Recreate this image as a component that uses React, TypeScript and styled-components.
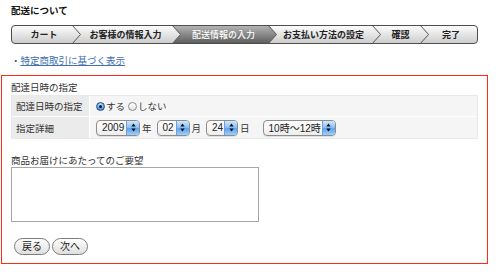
import React from "react";
import styled, { createGlobalStyle } from "styled-components";

const GlobalStyle = createGlobalStyle`
  html, body { margin: 0; padding: 0; background: #fff; }
  body {
    font-family: "Liberation Sans", "Noto Sans CJK JP", sans-serif;
    color: #333;
  }
`;

const LIGHT_TOP = "#fcfcfc";
const LIGHT_BOTTOM = "#cdcdcd";
const DARK_TOP = "#b4b4b4";
const DARK_BOTTOM = "#5e5e5e";

const Page = styled.div`
  width: 500px;
  height: 278px;
  overflow: hidden;
`;

const Header = styled.div`
  padding: 5px 0 0 11px;
`;

const Title = styled.h1`
  margin: 0;
  font-size: 9.5px;
  line-height: 12px;
  font-weight: bold;
  color: #111;
`;

const Stepper = styled.div`
  margin-top: 8px;
  width: 467px;
  height: 19px;
  box-sizing: border-box;
  border: 1px solid #4e4e4e;
  border-radius: 4px;
  overflow: hidden;
  display: flex;
  background: linear-gradient(${LIGHT_TOP}, ${LIGHT_BOTTOM});
`;

const Step = styled.div<{ $w: number; $active?: boolean; $shift: number }>`
  flex: none;
  width: ${(p) => p.$w}px;
  box-sizing: border-box;
  padding-left: ${(p) => Math.max(0, p.$shift) * 2}px;
  padding-right: ${(p) => Math.max(0, -p.$shift) * 2}px;
  display: flex;
  align-items: center;
  justify-content: center;
  font-size: 9px;
  font-weight: bold;
  white-space: nowrap;
  color: ${(p) => (p.$active ? "#f4f4f4" : "#222")};
  background: ${(p) =>
    p.$active ? `linear-gradient(${DARK_TOP}, ${DARK_BOTTOM})` : "transparent"};
  text-shadow: ${(p) => (p.$active ? "0 0 1px rgba(0,0,0,0.35)" : "none")};
`;

const SepSvg = styled.svg<{ $rightActive?: boolean }>`
  flex: none;
  display: block;
  width: 9px;
  height: 17px;
  background: ${(p) =>
    p.$rightActive ? `linear-gradient(${DARK_TOP}, ${DARK_BOTTOM})` : "transparent"};
`;

const Separator: React.FC<{ id: string; leftActive?: boolean; rightActive?: boolean }> = ({
  id,
  leftActive,
  rightActive,
}) => {
  const top = leftActive ? DARK_TOP : LIGHT_TOP;
  const bottom = leftActive ? DARK_BOTTOM : LIGHT_BOTTOM;
  return (
    <SepSvg $rightActive={rightActive} viewBox="0 0 9 17">
      <defs>
        <linearGradient id={id} x1="0" y1="0" x2="0" y2="1">
          <stop offset="0" stopColor={top} />
          <stop offset="1" stopColor={bottom} />
        </linearGradient>
      </defs>
      {(leftActive || rightActive) && (
        <polygon points="0,-1 8.5,8.5 0,18" fill={`url(#${id})`} />
      )}
      <polyline points="0,-1 8.5,8.5 0,18" fill="none" stroke="#575757" strokeWidth="1" />
    </SepSvg>
  );
};

const LinkRow = styled.div`
  margin-top: 11px;
  font-size: 9.5px;
  line-height: 12px;
  color: #555;
`;

const InfoLink = styled.a`
  color: #4170b0;
  text-decoration: underline;
`;

const Box = styled.div`
  margin: 8px 0 0 1px;
  width: 487px;
  box-sizing: border-box;
  border: 1px solid #ff2b17;
  padding: 6px 9px 8px 9px;
`;

const SectionTitle = styled.div`
  font-size: 9.5px;
  line-height: 12px;
  color: #333;
`;

const Table = styled.div`
  margin-top: 1px;
  width: 467px;
  display: grid;
  grid-template-columns: 77px 1fr;
  grid-template-rows: 20px 21px;
  gap: 1px;
  border: 1px solid #e9e9e9;
  background: #fff;
  box-sizing: border-box;
`;

const LabelCell = styled.div`
  background: #ebebeb;
  display: flex;
  align-items: center;
  padding-left: 4px;
  font-size: 9.5px;
  color: #333;
  white-space: nowrap;
`;

const ValueCell = styled.div`
  background: #f5f5f5;
  display: flex;
  align-items: center;
  padding-left: 6px;
  font-size: 9.5px;
  color: #333;
  white-space: nowrap;
`;

const RadioItem = styled.label`
  display: inline-flex;
  align-items: center;
  margin-right: 3px;
`;

const RadioDot = styled.span<{ $checked?: boolean }>`
  width: 9px;
  height: 9px;
  box-sizing: border-box;
  border-radius: 50%;
  margin-right: 1px;
  display: inline-flex;
  align-items: center;
  justify-content: center;
  border: 1px solid ${(p) => (p.$checked ? "#2a4d7a" : "#8a8a8a")};
  background: ${(p) =>
    p.$checked
      ? "radial-gradient(circle at 50% 30%, #d6ecff 0%, #5fa8f2 55%, #2f78d8 100%)"
      : "linear-gradient(#ffffff, #e4e4e4)"};
  &::after {
    content: "";
    width: 3px;
    height: 3px;
    border-radius: 50%;
    background: ${(p) => (p.$checked ? "#111" : "transparent")};
  }
`;

const SelectBox = styled.div<{ $w: number }>`
  width: ${(p) => p.$w}px;
  height: 16px;
  box-sizing: border-box;
  border: 1px solid #8c8c8c;
  border-radius: 4px;
  overflow: hidden;
  display: inline-flex;
  background: linear-gradient(#ffffff, #ededed);
  box-shadow: 0 1px 0 rgba(0, 0, 0, 0.08);
`;

const SelectValue = styled.span`
  flex: 1;
  display: flex;
  align-items: center;
  padding-left: 5px;
  font-size: 10px;
  color: #222;
`;

const SelectArrow = styled.span`
  flex: none;
  width: 12px;
  display: flex;
  align-items: center;
  justify-content: center;
  border-left: 1px solid #7b9ccb;
  background: linear-gradient(#cfe7ff 0%, #8cc2f7 45%, #5ba3ef 55%, #9fd0ff 100%);
`;

const Unit = styled.span<{ $gap: number }>`
  margin: 0 ${(p) => p.$gap}px 0 2px;
  font-size: 9.5px;
  color: #333;
`;

const Select: React.FC<{ w: number; value: string }> = ({ w, value }) => (
  <SelectBox $w={w}>
    <SelectValue>{value}</SelectValue>
    <SelectArrow>
      <svg width="5" height="9" viewBox="0 0 5 9">
        <polygon points="2.5,0.5 4.7,3.5 0.3,3.5" fill="#111" />
        <polygon points="2.5,8.5 4.7,5.5 0.3,5.5" fill="#111" />
      </svg>
    </SelectArrow>
  </SelectBox>
);

const TextLabel = styled.div`
  margin-top: 16px;
  font-size: 9.5px;
  line-height: 12px;
  color: #333;
`;

const Remarks = styled.textarea`
  display: block;
  width: 248px;
  height: 55px;
  box-sizing: border-box;
  border: 1px solid #a7a7a7;
  margin: 0;
  padding: 2px;
  resize: none;
  background: #fff;
`;

const ButtonRow = styled.div`
  margin: 16px 0 0 3px;
  display: flex;
  gap: 2px;
`;

const PillButton = styled.button`
  height: 17px;
  padding: 0 7px;
  box-sizing: border-box;
  border: 1px solid #7c7c7c;
  border-radius: 9px;
  background: linear-gradient(#ffffff, #dedede);
  font-family: "Liberation Sans", "Noto Sans CJK JP", sans-serif;
  font-size: 10px;
  line-height: 15px;
  color: #222;
`;

const steps = [
  { label: "カート", w: 60, shift: 2 },
  { label: "お客様の情報入力", w: 91, shift: -1 },
  { label: "配送情報の入力", w: 87, shift: -1, active: true },
  { label: "お支払い方法の設定", w: 95, shift: -1 },
  { label: "確認", w: 39, shift: 0 },
  { label: "完了", w: 48, shift: -2 },
];

export default function App() {
  return (
    <Page>
      <GlobalStyle />
      <Header>
        <Title>配送について</Title>
        <Stepper>
          {steps.map((s, i) => (
            <React.Fragment key={s.label}>
              <Step $w={s.w} $shift={s.shift} $active={s.active}>
                {s.label}
              </Step>
              {i < steps.length - 1 && (
                <Separator
                  id={`sep-grad-${i}`}
                  leftActive={s.active}
                  rightActive={steps[i + 1].active}
                />
              )}
            </React.Fragment>
          ))}
        </Stepper>
        <LinkRow>
          ・<InfoLink href="#">特定商取引に基づく表示</InfoLink>
        </LinkRow>
      </Header>
      <Box>
        <SectionTitle>配達日時の指定</SectionTitle>
        <Table>
          <LabelCell>配達日時の指定</LabelCell>
          <ValueCell>
            <RadioItem>
              <RadioDot $checked />
              する
            </RadioItem>
            <RadioItem>
              <RadioDot />
              しない
            </RadioItem>
          </ValueCell>
          <LabelCell>指定詳細</LabelCell>
          <ValueCell>
            <Select w={44} value="2009" />
            <Unit $gap={5}>年</Unit>
            <Select w={33} value="02" />
            <Unit $gap={5}>月</Unit>
            <Select w={32} value="24" />
            <Unit $gap={13}>日</Unit>
            <Select w={73} value="10時〜12時" />
          </ValueCell>
        </Table>
        <TextLabel>商品お届けにあたってのご要望</TextLabel>
        <Remarks />
        <ButtonRow>
          <PillButton>戻る</PillButton>
          <PillButton>次へ</PillButton>
        </ButtonRow>
      </Box>
    </Page>
  );
}
